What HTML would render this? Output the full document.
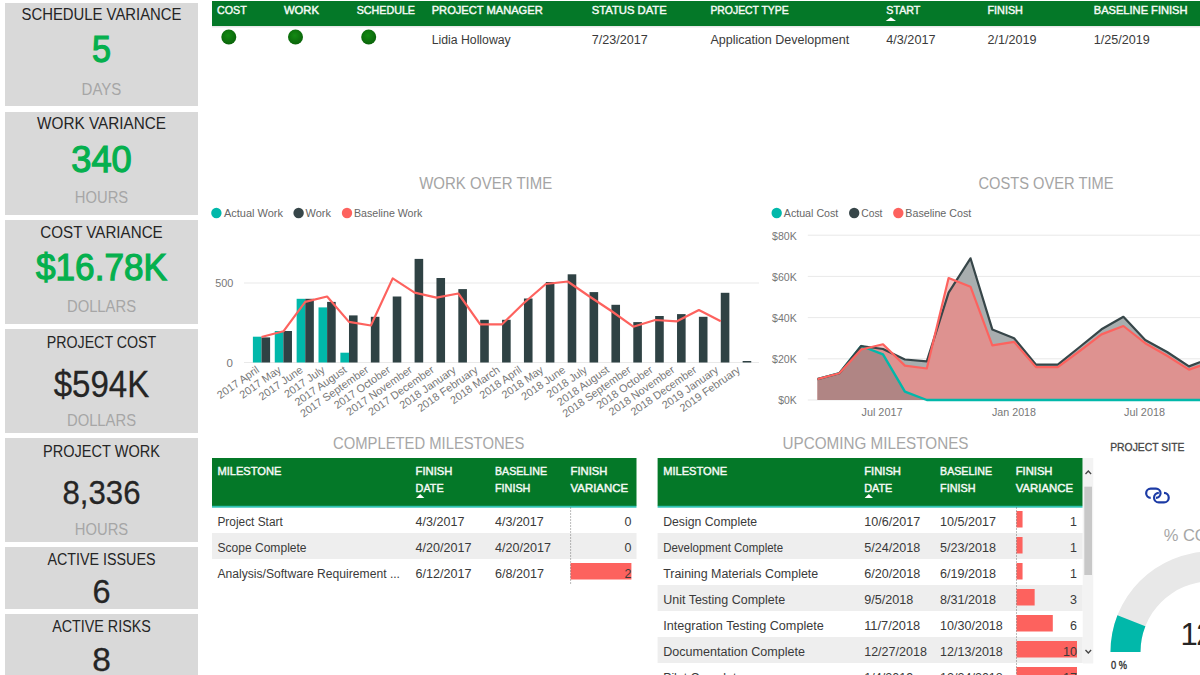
<!DOCTYPE html>
<html><head><meta charset="utf-8"><style>
html,body{margin:0;padding:0;background:#ffffff;width:1200px;height:675px;overflow:hidden}
svg{display:block;font-family:"Liberation Sans", sans-serif}
</style></head><body>
<svg width="1200" height="675" viewBox="0 0 1200 675">
<defs><radialGradient id="dot" cx="45%" cy="40%" r="60%"><stop offset="0" stop-color="#138a13"/><stop offset="1" stop-color="#0a640a"/></radialGradient></defs>
<rect x="5" y="3" width="193" height="103" fill="#d9d9d9"/>
<text x="101.5" y="20" font-size="16" fill="#252525" text-anchor="middle" font-weight="normal" textLength="160" lengthAdjust="spacingAndGlyphs">SCHEDULE VARIANCE</text>
<text x="101.5" y="61.6" font-size="36.5" fill="#05b04e" text-anchor="middle" font-weight="normal" textLength="19" lengthAdjust="spacingAndGlyphs" stroke="#05b04e" stroke-width="1.25">5</text>
<text x="101.5" y="94.5" font-size="16" fill="#a6a6a6" text-anchor="middle" font-weight="normal" textLength="39.8" lengthAdjust="spacingAndGlyphs">DAYS</text>
<rect x="5" y="112" width="193" height="103" fill="#d9d9d9"/>
<text x="101.5" y="129" font-size="16" fill="#252525" text-anchor="middle" font-weight="normal" textLength="128.9" lengthAdjust="spacingAndGlyphs">WORK VARIANCE</text>
<text x="101.5" y="171.6" font-size="36.5" fill="#05b04e" text-anchor="middle" font-weight="normal" textLength="60.5" lengthAdjust="spacingAndGlyphs" stroke="#05b04e" stroke-width="1.25">340</text>
<text x="101.5" y="202.8" font-size="16" fill="#a6a6a6" text-anchor="middle" font-weight="normal" textLength="53.3" lengthAdjust="spacingAndGlyphs">HOURS</text>
<rect x="5" y="220" width="193" height="104" fill="#d9d9d9"/>
<text x="101.5" y="238" font-size="16" fill="#252525" text-anchor="middle" font-weight="normal" textLength="122.4" lengthAdjust="spacingAndGlyphs">COST VARIANCE</text>
<text x="101.5" y="279.6" font-size="36.5" fill="#05b04e" text-anchor="middle" font-weight="normal" textLength="131" lengthAdjust="spacingAndGlyphs" stroke="#05b04e" stroke-width="1.25">$16.78K</text>
<text x="101.5" y="312" font-size="16" fill="#a6a6a6" text-anchor="middle" font-weight="normal" textLength="69.1" lengthAdjust="spacingAndGlyphs">DOLLARS</text>
<rect x="5" y="329" width="193" height="104" fill="#d9d9d9"/>
<text x="101.5" y="348.4" font-size="16" fill="#252525" text-anchor="middle" font-weight="normal" textLength="109.6" lengthAdjust="spacingAndGlyphs">PROJECT COST</text>
<text x="101.5" y="396.8" font-size="36.5" fill="#252525" text-anchor="middle" font-weight="normal" textLength="95.5" lengthAdjust="spacingAndGlyphs" stroke="#252525" stroke-width="0.3">$594K</text>
<text x="101.5" y="426" font-size="16" fill="#a6a6a6" text-anchor="middle" font-weight="normal" textLength="69.1" lengthAdjust="spacingAndGlyphs">DOLLARS</text>
<rect x="5" y="438" width="193" height="104" fill="#d9d9d9"/>
<text x="101.5" y="457.2" font-size="16" fill="#252525" text-anchor="middle" font-weight="normal" textLength="116.8" lengthAdjust="spacingAndGlyphs">PROJECT WORK</text>
<text x="101.5" y="504.4" font-size="33.5" fill="#252525" text-anchor="middle" font-weight="normal" textLength="78" lengthAdjust="spacingAndGlyphs" stroke="#252525" stroke-width="0.3">8,336</text>
<text x="101.5" y="535.2" font-size="16" fill="#a6a6a6" text-anchor="middle" font-weight="normal" textLength="53.3" lengthAdjust="spacingAndGlyphs">HOURS</text>
<rect x="5" y="547" width="193" height="62" fill="#d9d9d9"/>
<text x="101.5" y="565" font-size="16" fill="#252525" text-anchor="middle" font-weight="normal" textLength="108" lengthAdjust="spacingAndGlyphs">ACTIVE ISSUES</text>
<text x="101.5" y="603.4" font-size="32.5" fill="#252525" text-anchor="middle" font-weight="normal" stroke="#252525" stroke-width="0.3">6</text>
<rect x="5" y="614" width="193" height="70" fill="#d9d9d9"/>
<text x="101.5" y="632" font-size="16" fill="#252525" text-anchor="middle" font-weight="normal" textLength="98.6" lengthAdjust="spacingAndGlyphs">ACTIVE RISKS</text>
<text x="101.5" y="671.2" font-size="33.5" fill="#252525" text-anchor="middle" font-weight="normal" stroke="#252525" stroke-width="0.3">8</text>
<rect x="212" y="1" width="988" height="25" fill="#047828"/>
<rect x="212" y="26" width="988" height="1.5" fill="#e8e8e8"/>
<text x="217" y="14.2" font-size="11.5" fill="#f4f9f4" text-anchor="start" font-weight="normal" textLength="29.7" lengthAdjust="spacingAndGlyphs" stroke="#f4f9f4" stroke-width="0.45">COST</text>
<text x="284" y="14.2" font-size="11.5" fill="#f4f9f4" text-anchor="start" font-weight="normal" textLength="35" lengthAdjust="spacingAndGlyphs" stroke="#f4f9f4" stroke-width="0.45">WORK</text>
<text x="356.7" y="14.2" font-size="11.5" fill="#f4f9f4" text-anchor="start" font-weight="normal" textLength="58.3" lengthAdjust="spacingAndGlyphs" stroke="#f4f9f4" stroke-width="0.45">SCHEDULE</text>
<text x="431.7" y="14.2" font-size="11.5" fill="#f4f9f4" text-anchor="start" font-weight="normal" textLength="111" lengthAdjust="spacingAndGlyphs" stroke="#f4f9f4" stroke-width="0.45">PROJECT MANAGER</text>
<text x="591.7" y="14.2" font-size="11.5" fill="#f4f9f4" text-anchor="start" font-weight="normal" textLength="75" lengthAdjust="spacingAndGlyphs" stroke="#f4f9f4" stroke-width="0.45">STATUS DATE</text>
<text x="710.4" y="14.2" font-size="11.5" fill="#f4f9f4" text-anchor="start" font-weight="normal" textLength="78.3" lengthAdjust="spacingAndGlyphs" stroke="#f4f9f4" stroke-width="0.45">PROJECT TYPE</text>
<text x="886.3" y="14.2" font-size="11.5" fill="#f4f9f4" text-anchor="start" font-weight="normal" textLength="34" lengthAdjust="spacingAndGlyphs" stroke="#f4f9f4" stroke-width="0.45">START</text>
<text x="987.5" y="14.2" font-size="11.5" fill="#f4f9f4" text-anchor="start" font-weight="normal" textLength="35.4" lengthAdjust="spacingAndGlyphs" stroke="#f4f9f4" stroke-width="0.45">FINISH</text>
<text x="1093.75" y="14.2" font-size="11.5" fill="#f4f9f4" text-anchor="start" font-weight="normal" textLength="93.75" lengthAdjust="spacingAndGlyphs" stroke="#f4f9f4" stroke-width="0.45">BASELINE FINISH</text>
<path d="M885.7 21.1 L890.85 17.3 L896 21.1 Z" fill="#ffffff"/>
<circle cx="228.8" cy="37" r="7.5" fill="url(#dot)"/>
<circle cx="295.5" cy="37" r="7.5" fill="url(#dot)"/>
<circle cx="368.7" cy="37" r="7.5" fill="url(#dot)"/>
<text x="431.7" y="43.5" font-size="12.5" fill="#3a3a3a" text-anchor="start" font-weight="normal" textLength="79" lengthAdjust="spacingAndGlyphs">Lidia Holloway</text>
<text x="591.7" y="43.5" font-size="12.5" fill="#3a3a3a" text-anchor="start" font-weight="normal" textLength="56" lengthAdjust="spacingAndGlyphs">7/23/2017</text>
<text x="710.4" y="43.5" font-size="12.5" fill="#3a3a3a" text-anchor="start" font-weight="normal" textLength="138.75" lengthAdjust="spacingAndGlyphs">Application Development</text>
<text x="886.3" y="43.5" font-size="12.5" fill="#3a3a3a" text-anchor="start" font-weight="normal" textLength="49.2" lengthAdjust="spacingAndGlyphs">4/3/2017</text>
<text x="987.5" y="43.5" font-size="12.5" fill="#3a3a3a" text-anchor="start" font-weight="normal" textLength="49" lengthAdjust="spacingAndGlyphs">2/1/2019</text>
<text x="1093.75" y="43.5" font-size="12.5" fill="#3a3a3a" text-anchor="start" font-weight="normal" textLength="56" lengthAdjust="spacingAndGlyphs">1/25/2019</text>
<text x="485.7" y="189.3" font-size="16.5" fill="#a4a4a4" text-anchor="middle" font-weight="normal" textLength="133" lengthAdjust="spacingAndGlyphs">WORK OVER TIME</text>
<circle cx="216.4" cy="213" r="5.2" fill="#01b8aa"/>
<text x="224" y="217.2" font-size="11.5" fill="#666666" text-anchor="start" font-weight="normal" textLength="59" lengthAdjust="spacingAndGlyphs">Actual Work</text>
<circle cx="298.6" cy="213" r="5.2" fill="#374649"/>
<text x="305.6" y="217.2" font-size="11.5" fill="#666666" text-anchor="start" font-weight="normal" textLength="25.4" lengthAdjust="spacingAndGlyphs">Work</text>
<circle cx="347" cy="213" r="5.2" fill="#fd625e"/>
<text x="354" y="217.2" font-size="11.5" fill="#666666" text-anchor="start" font-weight="normal" textLength="68.4" lengthAdjust="spacingAndGlyphs">Baseline Work</text>
<rect x="244" y="282.5" width="515" height="1" fill="#e9e9e9"/>
<rect x="244" y="362" width="515" height="1" fill="#e9e9e9"/>
<text x="233.4" y="287" font-size="11.5" fill="#777777" text-anchor="end" font-weight="normal" textLength="18.1" lengthAdjust="spacingAndGlyphs">500</text>
<text x="233" y="366.5" font-size="11.5" fill="#777777" text-anchor="end" font-weight="normal">0</text>
<rect x="252.9" y="336.7" width="8.6" height="25.8" fill="#01b8aa"/>
<rect x="274.77" y="331" width="8.6" height="31.5" fill="#01b8aa"/>
<rect x="296.64" y="298.8" width="8.6" height="63.7" fill="#01b8aa"/>
<rect x="318.51" y="307.4" width="8.6" height="55.1" fill="#01b8aa"/>
<rect x="340.38" y="352.7" width="8.6" height="9.8" fill="#01b8aa"/>
<rect x="261.5" y="337.4" width="8.6" height="25.1" fill="#2f4244"/>
<rect x="283.37" y="331.0" width="8.6" height="31.5" fill="#2f4244"/>
<rect x="305.24" y="298.8" width="8.6" height="63.7" fill="#2f4244"/>
<rect x="327.11" y="301.9" width="8.6" height="60.6" fill="#2f4244"/>
<rect x="348.98" y="315.4" width="8.6" height="47.1" fill="#2f4244"/>
<rect x="370.85" y="316.8" width="8.6" height="45.7" fill="#2f4244"/>
<rect x="392.72" y="296.5" width="8.6" height="66.0" fill="#2f4244"/>
<rect x="414.59" y="258.9" width="8.6" height="103.6" fill="#2f4244"/>
<rect x="436.46" y="278.0" width="8.6" height="84.5" fill="#2f4244"/>
<rect x="458.33" y="289.1" width="8.6" height="73.4" fill="#2f4244"/>
<rect x="480.2" y="319.8" width="8.6" height="42.7" fill="#2f4244"/>
<rect x="502.07" y="319.8" width="8.6" height="42.7" fill="#2f4244"/>
<rect x="523.94" y="298.5" width="8.6" height="64.0" fill="#2f4244"/>
<rect x="545.81" y="282.0" width="8.6" height="80.5" fill="#2f4244"/>
<rect x="567.68" y="274.3" width="8.6" height="88.2" fill="#2f4244"/>
<rect x="589.55" y="292.1" width="8.6" height="70.4" fill="#2f4244"/>
<rect x="611.42" y="304.8" width="8.6" height="57.7" fill="#2f4244"/>
<rect x="633.29" y="322.1" width="8.6" height="40.4" fill="#2f4244"/>
<rect x="655.16" y="316.0" width="8.6" height="46.5" fill="#2f4244"/>
<rect x="677.03" y="314.1" width="8.6" height="48.4" fill="#2f4244"/>
<rect x="698.9" y="316.8" width="8.6" height="45.7" fill="#2f4244"/>
<rect x="720.77" y="292.8" width="8.6" height="69.7" fill="#2f4244"/>
<rect x="742.64" y="361.0" width="8.6" height="1.5" fill="#2f4244"/>
<polyline points="261.5,337 283.4,331.3 305.2,301.9 327.1,296.5 349.0,321.9 370.9,325.5 392.7,278.4 414.6,292.6 436.5,297.6 458.3,293.5 480.2,324.3 502.1,324.3 523.9,303 545.8,284 567.7,281.5 589.5,296.5 611.4,311 633.3,326.7 655.2,320 677.0,321.3 698.9,310.1 720.8,321.3" fill="none" stroke="#fd625e" stroke-width="2.2" stroke-linejoin="round"/>
<text x="260.0" y="371.5" font-size="10.9" fill="#777777" text-anchor="end" font-weight="normal" transform="rotate(-35 260.0 371.5)">2017 April</text>
<text x="281.9" y="371.5" font-size="10.9" fill="#777777" text-anchor="end" font-weight="normal" transform="rotate(-35 281.9 371.5)">2017 May</text>
<text x="303.7" y="371.5" font-size="10.9" fill="#777777" text-anchor="end" font-weight="normal" transform="rotate(-35 303.7 371.5)">2017 June</text>
<text x="325.6" y="371.5" font-size="10.9" fill="#777777" text-anchor="end" font-weight="normal" transform="rotate(-35 325.6 371.5)">2017 July</text>
<text x="347.5" y="371.5" font-size="10.9" fill="#777777" text-anchor="end" font-weight="normal" transform="rotate(-35 347.5 371.5)">2017 August</text>
<text x="369.4" y="371.5" font-size="10.9" fill="#777777" text-anchor="end" font-weight="normal" transform="rotate(-35 369.4 371.5)">2017 September</text>
<text x="391.2" y="371.5" font-size="10.9" fill="#777777" text-anchor="end" font-weight="normal" transform="rotate(-35 391.2 371.5)">2017 October</text>
<text x="413.1" y="371.5" font-size="10.9" fill="#777777" text-anchor="end" font-weight="normal" transform="rotate(-35 413.1 371.5)">2017 November</text>
<text x="435.0" y="371.5" font-size="10.9" fill="#777777" text-anchor="end" font-weight="normal" transform="rotate(-35 435.0 371.5)">2017 December</text>
<text x="456.8" y="371.5" font-size="10.9" fill="#777777" text-anchor="end" font-weight="normal" transform="rotate(-35 456.8 371.5)">2018 January</text>
<text x="478.7" y="371.5" font-size="10.9" fill="#777777" text-anchor="end" font-weight="normal" transform="rotate(-35 478.7 371.5)">2018 February</text>
<text x="500.6" y="371.5" font-size="10.9" fill="#777777" text-anchor="end" font-weight="normal" transform="rotate(-35 500.6 371.5)">2018 March</text>
<text x="522.4" y="371.5" font-size="10.9" fill="#777777" text-anchor="end" font-weight="normal" transform="rotate(-35 522.4 371.5)">2018 April</text>
<text x="544.3" y="371.5" font-size="10.9" fill="#777777" text-anchor="end" font-weight="normal" transform="rotate(-35 544.3 371.5)">2018 May</text>
<text x="566.2" y="371.5" font-size="10.9" fill="#777777" text-anchor="end" font-weight="normal" transform="rotate(-35 566.2 371.5)">2018 June</text>
<text x="588.0" y="371.5" font-size="10.9" fill="#777777" text-anchor="end" font-weight="normal" transform="rotate(-35 588.0 371.5)">2018 July</text>
<text x="609.9" y="371.5" font-size="10.9" fill="#777777" text-anchor="end" font-weight="normal" transform="rotate(-35 609.9 371.5)">2018 August</text>
<text x="631.8" y="371.5" font-size="10.9" fill="#777777" text-anchor="end" font-weight="normal" transform="rotate(-35 631.8 371.5)">2018 September</text>
<text x="653.7" y="371.5" font-size="10.9" fill="#777777" text-anchor="end" font-weight="normal" transform="rotate(-35 653.7 371.5)">2018 October</text>
<text x="675.5" y="371.5" font-size="10.9" fill="#777777" text-anchor="end" font-weight="normal" transform="rotate(-35 675.5 371.5)">2018 November</text>
<text x="697.4" y="371.5" font-size="10.9" fill="#777777" text-anchor="end" font-weight="normal" transform="rotate(-35 697.4 371.5)">2018 December</text>
<text x="719.3" y="371.5" font-size="10.9" fill="#777777" text-anchor="end" font-weight="normal" transform="rotate(-35 719.3 371.5)">2019 January</text>
<text x="741.1" y="371.5" font-size="10.9" fill="#777777" text-anchor="end" font-weight="normal" transform="rotate(-35 741.1 371.5)">2019 February</text>
<text x="1046" y="189.3" font-size="16.5" fill="#a4a4a4" text-anchor="middle" font-weight="normal" textLength="135" lengthAdjust="spacingAndGlyphs">COSTS OVER TIME</text>
<circle cx="776.7" cy="213" r="5.2" fill="#01b8aa"/>
<text x="783.8" y="217.2" font-size="11.5" fill="#666666" text-anchor="start" font-weight="normal" textLength="54.5" lengthAdjust="spacingAndGlyphs">Actual Cost</text>
<circle cx="854.2" cy="213" r="5.2" fill="#374649"/>
<text x="861.3" y="217.2" font-size="11.5" fill="#666666" text-anchor="start" font-weight="normal" textLength="21.2" lengthAdjust="spacingAndGlyphs">Cost</text>
<circle cx="898.3" cy="213" r="5.2" fill="#fd625e"/>
<text x="905.3" y="217.2" font-size="11.5" fill="#666666" text-anchor="start" font-weight="normal" textLength="66" lengthAdjust="spacingAndGlyphs">Baseline Cost</text>
<rect x="807.8" y="399.5" width="400" height="1" fill="#e9e9e9"/>
<text x="796.7" y="404.3" font-size="11.5" fill="#777777" text-anchor="end" font-weight="normal" textLength="18.5" lengthAdjust="spacingAndGlyphs">$0K</text>
<rect x="807.8" y="358.3" width="400" height="1" fill="#e9e9e9"/>
<text x="796.7" y="363.1" font-size="11.5" fill="#777777" text-anchor="end" font-weight="normal" textLength="24.7" lengthAdjust="spacingAndGlyphs">$20K</text>
<rect x="807.8" y="317.1" width="400" height="1" fill="#e9e9e9"/>
<text x="796.7" y="321.9" font-size="11.5" fill="#777777" text-anchor="end" font-weight="normal" textLength="24.7" lengthAdjust="spacingAndGlyphs">$40K</text>
<rect x="807.8" y="275.9" width="400" height="1" fill="#e9e9e9"/>
<text x="796.7" y="280.7" font-size="11.5" fill="#777777" text-anchor="end" font-weight="normal" textLength="24.7" lengthAdjust="spacingAndGlyphs">$60K</text>
<rect x="807.8" y="234.7" width="400" height="1" fill="#e9e9e9"/>
<text x="796.7" y="239.5" font-size="11.5" fill="#777777" text-anchor="end" font-weight="normal" textLength="24.7" lengthAdjust="spacingAndGlyphs">$80K</text>
<clipPath id="costclip"><polygon points="817.5,400 817.5,379.1 839.4,373.2 861.2,346 883.0,349 904.9,359.5 926.8,361.4 948.6,292.7 970.5,258.3 992.3,329.4 1014.1,338.2 1036.0,364.6 1057.8,364.6 1079.7,347 1101.5,329.3 1123.4,316.8 1145.2,340 1167.1,352 1189.0,366.4 1210.8,358 1210.8,400"/></clipPath>
<polygon points="817.5,400 817.5,379.1 839.4,373.2 861.2,346 883.0,349 904.9,359.5 926.8,361.4 948.6,292.7 970.5,258.3 992.3,329.4 1014.1,338.2 1036.0,364.6 1057.8,364.6 1079.7,347 1101.5,329.3 1123.4,316.8 1145.2,340 1167.1,352 1189.0,366.4 1210.8,358 1210.8,400" fill="#a8aeaf"/>
<polygon points="817.5,400 817.5,379.1 839.4,373.2 861.2,349.5 883.0,344.3 904.9,365.6 926.8,368.5 948.6,278 970.5,286.7 992.3,345.3 1014.1,341.9 1036.0,367.1 1057.8,367.1 1079.7,351 1101.5,334.4 1123.4,326 1145.2,343.2 1167.1,355.8 1189.0,369.6 1210.8,362 1210.8,400" fill="#f4c4c3"/>
<polygon points="817.5,400 817.5,379.1 839.4,373.2 861.2,349.5 883.0,344.3 904.9,365.6 926.8,368.5 948.6,278 970.5,286.7 992.3,345.3 1014.1,341.9 1036.0,367.1 1057.8,367.1 1079.7,351 1101.5,334.4 1123.4,326 1145.2,343.2 1167.1,355.8 1189.0,369.6 1210.8,362 1210.8,400" fill="#de9290" clip-path="url(#costclip)"/>
<polygon points="817.5,400 817.5,379.1 839.4,373.2 861.2,346 883.0,354.3 904.9,391.7 926.8,400 948.6,400 970.5,400 992.3,400 1014.1,400 1036.0,400 1057.8,400 1079.7,400 1101.5,400 1123.4,400 1145.2,400 1167.1,400 1189.0,400 1210.8,400 1210.8,400" fill="#b08584"/>
<polyline points="817.5,379.1 839.4,373.2 861.2,346 883.0,354.3 904.9,391.7 926.8,400 948.6,400 970.5,400 992.3,400 1014.1,400 1036.0,400 1057.8,400 1079.7,400 1101.5,400 1123.4,400 1145.2,400 1167.1,400 1189.0,400 1210.8,400" fill="none" stroke="#01b8aa" stroke-width="2.4" stroke-linejoin="round"/>
<polyline points="817.5,379.1 839.4,373.2 861.2,346 883.0,349 904.9,359.5 926.8,361.4 948.6,292.7 970.5,258.3 992.3,329.4 1014.1,338.2 1036.0,364.6 1057.8,364.6 1079.7,347 1101.5,329.3 1123.4,316.8 1145.2,340 1167.1,352 1189.0,366.4 1210.8,358" fill="none" stroke="#374649" stroke-width="2.2" stroke-linejoin="round"/>
<polyline points="817.5,379.1 839.4,373.2 861.2,349.5 883.0,344.3 904.9,365.6 926.8,368.5 948.6,278 970.5,286.7 992.3,345.3 1014.1,341.9 1036.0,367.1 1057.8,367.1 1079.7,351 1101.5,334.4 1123.4,326 1145.2,343.2 1167.1,355.8 1189.0,369.6 1210.8,362" fill="none" stroke="#fd625e" stroke-width="2.2" stroke-linejoin="round"/>
<text x="882" y="416" font-size="11.5" fill="#777777" text-anchor="middle" font-weight="normal" textLength="41" lengthAdjust="spacingAndGlyphs">Jul 2017</text>
<text x="1014" y="416" font-size="11.5" fill="#777777" text-anchor="middle" font-weight="normal" textLength="44" lengthAdjust="spacingAndGlyphs">Jan 2018</text>
<text x="1144.5" y="416" font-size="11.5" fill="#777777" text-anchor="middle" font-weight="normal" textLength="41" lengthAdjust="spacingAndGlyphs">Jul 2018</text>
<text x="428.7" y="448.9" font-size="16.5" fill="#a6a6a6" text-anchor="middle" font-weight="normal" textLength="191.2" lengthAdjust="spacingAndGlyphs">COMPLETED MILESTONES</text>
<rect x="212" y="458" width="424.5" height="48" fill="#047828"/>
<rect x="212" y="505.8" width="424.5" height="1.9" fill="#2fc2b2"/>
<text x="217.4" y="475.3" font-size="11.5" fill="#f4f9f4" text-anchor="start" font-weight="normal" textLength="64" lengthAdjust="spacingAndGlyphs" stroke="#f4f9f4" stroke-width="0.45">MILESTONE</text>
<text x="415.6" y="475.3" font-size="11.5" fill="#f4f9f4" text-anchor="start" font-weight="normal" textLength="36.8" lengthAdjust="spacingAndGlyphs" stroke="#f4f9f4" stroke-width="0.45">FINISH</text>
<text x="415.6" y="492" font-size="11.5" fill="#f4f9f4" text-anchor="start" font-weight="normal" textLength="28" lengthAdjust="spacingAndGlyphs" stroke="#f4f9f4" stroke-width="0.45">DATE</text>
<text x="495" y="475.3" font-size="11.5" fill="#f4f9f4" text-anchor="start" font-weight="normal" textLength="52" lengthAdjust="spacingAndGlyphs" stroke="#f4f9f4" stroke-width="0.45">BASELINE</text>
<text x="495" y="492" font-size="11.5" fill="#f4f9f4" text-anchor="start" font-weight="normal" textLength="35.4" lengthAdjust="spacingAndGlyphs" stroke="#f4f9f4" stroke-width="0.45">FINISH</text>
<text x="570.6" y="475.3" font-size="11.5" fill="#f4f9f4" text-anchor="start" font-weight="normal" textLength="36.8" lengthAdjust="spacingAndGlyphs" stroke="#f4f9f4" stroke-width="0.45">FINISH</text>
<text x="570.6" y="492" font-size="11.5" fill="#f4f9f4" text-anchor="start" font-weight="normal" textLength="57.4" lengthAdjust="spacingAndGlyphs" stroke="#f4f9f4" stroke-width="0.45">VARIANCE</text>
<rect x="212" y="533" width="424.5" height="26" fill="#eeeeee"/>
<text x="217.4" y="525.6" font-size="12.5" fill="#3a3a3a" text-anchor="start" font-weight="normal" textLength="65.4" lengthAdjust="spacingAndGlyphs">Project Start</text>
<text x="415.6" y="525.6" font-size="12.5" fill="#3a3a3a" text-anchor="start" font-weight="normal" textLength="48.8" lengthAdjust="spacingAndGlyphs">4/3/2017</text>
<text x="495" y="525.6" font-size="12.5" fill="#3a3a3a" text-anchor="start" font-weight="normal" textLength="48.8" lengthAdjust="spacingAndGlyphs">4/3/2017</text>
<text x="631.4" y="525.6" font-size="12.5" fill="#3a3a3a" text-anchor="end" font-weight="normal">0</text>
<text x="217.4" y="551.6" font-size="12.5" fill="#3a3a3a" text-anchor="start" font-weight="normal" textLength="89.2" lengthAdjust="spacingAndGlyphs">Scope Complete</text>
<text x="415.6" y="551.6" font-size="12.5" fill="#3a3a3a" text-anchor="start" font-weight="normal" textLength="56" lengthAdjust="spacingAndGlyphs">4/20/2017</text>
<text x="495" y="551.6" font-size="12.5" fill="#3a3a3a" text-anchor="start" font-weight="normal" textLength="56" lengthAdjust="spacingAndGlyphs">4/20/2017</text>
<text x="631.4" y="551.6" font-size="12.5" fill="#3a3a3a" text-anchor="end" font-weight="normal">0</text>
<rect x="570.6" y="563" width="60.8" height="16.5" fill="#fd625e"/>
<text x="217.4" y="577.6" font-size="12.5" fill="#3a3a3a" text-anchor="start" font-weight="normal" textLength="182.6" lengthAdjust="spacingAndGlyphs">Analysis/Software Requirement ...</text>
<text x="415.6" y="577.6" font-size="12.5" fill="#3a3a3a" text-anchor="start" font-weight="normal" textLength="56" lengthAdjust="spacingAndGlyphs">6/12/2017</text>
<text x="495" y="577.6" font-size="12.5" fill="#3a3a3a" text-anchor="start" font-weight="normal" textLength="49" lengthAdjust="spacingAndGlyphs">6/8/2017</text>
<text x="631.4" y="577.6" font-size="12.5" fill="#3a3a3a" text-anchor="end" font-weight="normal">2</text>
<line x1="570.6" y1="507.5" x2="570.6" y2="585" stroke="#555" stroke-width="0.8" stroke-dasharray="1 2"/>
<path d="M416 498 L420.2 494 L424.4 498 Z" fill="#ffffff"/>
<text x="875.5" y="448.9" font-size="16.5" fill="#a6a6a6" text-anchor="middle" font-weight="normal" textLength="186" lengthAdjust="spacingAndGlyphs">UPCOMING MILESTONES</text>
<rect x="657.6" y="458" width="425.1" height="48" fill="#047828"/>
<rect x="657.6" y="505.8" width="425.1" height="1.9" fill="#2fc2b2"/>
<text x="663.2" y="475.3" font-size="11.5" fill="#f4f9f4" text-anchor="start" font-weight="normal" textLength="64" lengthAdjust="spacingAndGlyphs" stroke="#f4f9f4" stroke-width="0.45">MILESTONE</text>
<text x="864.2" y="475.3" font-size="11.5" fill="#f4f9f4" text-anchor="start" font-weight="normal" textLength="36.8" lengthAdjust="spacingAndGlyphs" stroke="#f4f9f4" stroke-width="0.45">FINISH</text>
<text x="864.2" y="492" font-size="11.5" fill="#f4f9f4" text-anchor="start" font-weight="normal" textLength="28" lengthAdjust="spacingAndGlyphs" stroke="#f4f9f4" stroke-width="0.45">DATE</text>
<text x="940.1" y="475.3" font-size="11.5" fill="#f4f9f4" text-anchor="start" font-weight="normal" textLength="52" lengthAdjust="spacingAndGlyphs" stroke="#f4f9f4" stroke-width="0.45">BASELINE</text>
<text x="940.1" y="492" font-size="11.5" fill="#f4f9f4" text-anchor="start" font-weight="normal" textLength="35.4" lengthAdjust="spacingAndGlyphs" stroke="#f4f9f4" stroke-width="0.45">FINISH</text>
<text x="1015.7" y="475.3" font-size="11.5" fill="#f4f9f4" text-anchor="start" font-weight="normal" textLength="36.8" lengthAdjust="spacingAndGlyphs" stroke="#f4f9f4" stroke-width="0.45">FINISH</text>
<text x="1015.7" y="492" font-size="11.5" fill="#f4f9f4" text-anchor="start" font-weight="normal" textLength="57.4" lengthAdjust="spacingAndGlyphs" stroke="#f4f9f4" stroke-width="0.45">VARIANCE</text>
<rect x="657.6" y="533" width="425.1" height="26" fill="#eeeeee"/>
<rect x="657.6" y="585" width="425.1" height="26" fill="#eeeeee"/>
<rect x="657.6" y="637" width="425.1" height="26" fill="#eeeeee"/>
<rect x="1016.5" y="511" width="6.05" height="16.5" fill="#fd625e"/>
<text x="663.2" y="525.6" font-size="12.5" fill="#3a3a3a" text-anchor="start" font-weight="normal" textLength="94" lengthAdjust="spacingAndGlyphs">Design Complete</text>
<text x="864.2" y="525.6" font-size="12.5" fill="#3a3a3a" text-anchor="start" font-weight="normal" textLength="56" lengthAdjust="spacingAndGlyphs">10/6/2017</text>
<text x="940.1" y="525.6" font-size="12.5" fill="#3a3a3a" text-anchor="start" font-weight="normal" textLength="56" lengthAdjust="spacingAndGlyphs">10/5/2017</text>
<text x="1077" y="525.6" font-size="12.5" fill="#3a3a3a" text-anchor="end" font-weight="normal">1</text>
<rect x="1016.5" y="537" width="6.05" height="16.5" fill="#fd625e"/>
<text x="663.2" y="551.6" font-size="12.5" fill="#3a3a3a" text-anchor="start" font-weight="normal" textLength="120" lengthAdjust="spacingAndGlyphs">Development Complete</text>
<text x="864.2" y="551.6" font-size="12.5" fill="#3a3a3a" text-anchor="start" font-weight="normal" textLength="56" lengthAdjust="spacingAndGlyphs">5/24/2018</text>
<text x="940.1" y="551.6" font-size="12.5" fill="#3a3a3a" text-anchor="start" font-weight="normal" textLength="56" lengthAdjust="spacingAndGlyphs">5/23/2018</text>
<text x="1077" y="551.6" font-size="12.5" fill="#3a3a3a" text-anchor="end" font-weight="normal">1</text>
<rect x="1016.5" y="563" width="6.05" height="16.5" fill="#fd625e"/>
<text x="663.2" y="577.6" font-size="12.5" fill="#3a3a3a" text-anchor="start" font-weight="normal" textLength="155" lengthAdjust="spacingAndGlyphs">Training Materials Complete</text>
<text x="864.2" y="577.6" font-size="12.5" fill="#3a3a3a" text-anchor="start" font-weight="normal" textLength="56" lengthAdjust="spacingAndGlyphs">6/20/2018</text>
<text x="940.1" y="577.6" font-size="12.5" fill="#3a3a3a" text-anchor="start" font-weight="normal" textLength="56" lengthAdjust="spacingAndGlyphs">6/19/2018</text>
<text x="1077" y="577.6" font-size="12.5" fill="#3a3a3a" text-anchor="end" font-weight="normal">1</text>
<rect x="1016.5" y="589" width="18.15" height="16.5" fill="#fd625e"/>
<text x="663.2" y="603.6" font-size="12.5" fill="#3a3a3a" text-anchor="start" font-weight="normal" textLength="122" lengthAdjust="spacingAndGlyphs">Unit Testing Complete</text>
<text x="864.2" y="603.6" font-size="12.5" fill="#3a3a3a" text-anchor="start" font-weight="normal" textLength="49" lengthAdjust="spacingAndGlyphs">9/5/2018</text>
<text x="940.1" y="603.6" font-size="12.5" fill="#3a3a3a" text-anchor="start" font-weight="normal" textLength="56" lengthAdjust="spacingAndGlyphs">8/31/2018</text>
<text x="1077" y="603.6" font-size="12.5" fill="#3a3a3a" text-anchor="end" font-weight="normal">3</text>
<rect x="1016.5" y="615" width="36.3" height="16.5" fill="#fd625e"/>
<text x="663.2" y="629.6" font-size="12.5" fill="#3a3a3a" text-anchor="start" font-weight="normal" textLength="160.6" lengthAdjust="spacingAndGlyphs">Integration Testing Complete</text>
<text x="864.2" y="629.6" font-size="12.5" fill="#3a3a3a" text-anchor="start" font-weight="normal" textLength="56" lengthAdjust="spacingAndGlyphs">11/7/2018</text>
<text x="940.1" y="629.6" font-size="12.5" fill="#3a3a3a" text-anchor="start" font-weight="normal" textLength="62.7" lengthAdjust="spacingAndGlyphs">10/30/2018</text>
<text x="1077" y="629.6" font-size="12.5" fill="#3a3a3a" text-anchor="end" font-weight="normal">6</text>
<rect x="1016.5" y="641" width="60.5" height="16.5" fill="#fd625e"/>
<text x="663.2" y="655.6" font-size="12.5" fill="#3a3a3a" text-anchor="start" font-weight="normal" textLength="141.7" lengthAdjust="spacingAndGlyphs">Documentation Complete</text>
<text x="864.2" y="655.6" font-size="12.5" fill="#3a3a3a" text-anchor="start" font-weight="normal" textLength="62.7" lengthAdjust="spacingAndGlyphs">12/27/2018</text>
<text x="940.1" y="655.6" font-size="12.5" fill="#3a3a3a" text-anchor="start" font-weight="normal" textLength="62.7" lengthAdjust="spacingAndGlyphs">12/13/2018</text>
<text x="1077" y="655.6" font-size="12.5" fill="#3a3a3a" text-anchor="end" font-weight="normal">10</text>
<rect x="1016.5" y="667" width="60.5" height="16.5" fill="#fd625e"/>
<text x="663.2" y="681.6" font-size="12.5" fill="#3a3a3a" text-anchor="start" font-weight="normal" textLength="80" lengthAdjust="spacingAndGlyphs">Pilot Complete</text>
<text x="864.2" y="681.6" font-size="12.5" fill="#3a3a3a" text-anchor="start" font-weight="normal" textLength="49" lengthAdjust="spacingAndGlyphs">1/4/2019</text>
<text x="940.1" y="681.6" font-size="12.5" fill="#3a3a3a" text-anchor="start" font-weight="normal" textLength="62.7" lengthAdjust="spacingAndGlyphs">12/24/2018</text>
<text x="1077" y="681.6" font-size="12.5" fill="#3a3a3a" text-anchor="end" font-weight="normal">17</text>
<line x1="1016.5" y1="507.5" x2="1016.5" y2="689" stroke="#555" stroke-width="0.8" stroke-dasharray="1 2"/>
<path d="M864.6 498 L868.8 494 L873 498 Z" fill="#ffffff"/>
<rect x="1082.7" y="458" width="10.6" height="205.5" fill="#f3f3f3"/>
<rect x="1084.3" y="486.7" width="7.7" height="88.3" fill="#c8c8c8"/>
<path d="M1085.5 474 L1088.3 471 L1091.1 474" fill="none" stroke="#444" stroke-width="1.3"/>
<path d="M1085.5 650 L1088.3 653 L1091.1 650" fill="none" stroke="#444" stroke-width="1.3"/>
<text x="1110.2" y="450.7" font-size="11.5" fill="#444444" text-anchor="start" font-weight="normal" textLength="74.2" lengthAdjust="spacingAndGlyphs" stroke="#444444" stroke-width="0.3">PROJECT SITE</text>
<g fill="none" stroke="#1c3ba5" stroke-width="2.2" stroke-linecap="butt"><path d="M1150.7 497.8 A4.55 4.55 0 0 1 1150.7 488.7 L1156 488.7 A4.55 4.55 0 0 1 1156 497.8"/><path d="M1158.8 492.9 A4.75 4.75 0 0 0 1158.8 502.4 L1164 502.4 A4.75 4.75 0 0 0 1164 492.9"/></g>
<text x="1163.7" y="541" font-size="16.5" fill="#a6a6a6" text-anchor="start" font-weight="normal">% COMPLETE</text>
<path d="M1110.50 652.00 A100.5 100.5 0 0 1 1311.50 652.00 L1281.50 652.00 A70.5 70.5 0 0 0 1140.50 652.00 Z" fill="#e8e8e8"/>
<path d="M1110.50 652.00 A100.5 100.5 0 0 1 1117.43 615.33 L1145.36 626.28 A70.5 70.5 0 0 0 1140.50 652.00 Z" fill="#01b8aa"/>
<text x="1111.1" y="668.6" font-size="10" fill="#333333" text-anchor="start" font-weight="normal" textLength="16" lengthAdjust="spacingAndGlyphs" stroke="#333333" stroke-width="0.35">0 %</text>
<text x="1180.5" y="645.3" font-size="31" fill="#252525" text-anchor="start" font-weight="normal" letter-spacing="-1.5">12</text>
</svg>
</body></html>
